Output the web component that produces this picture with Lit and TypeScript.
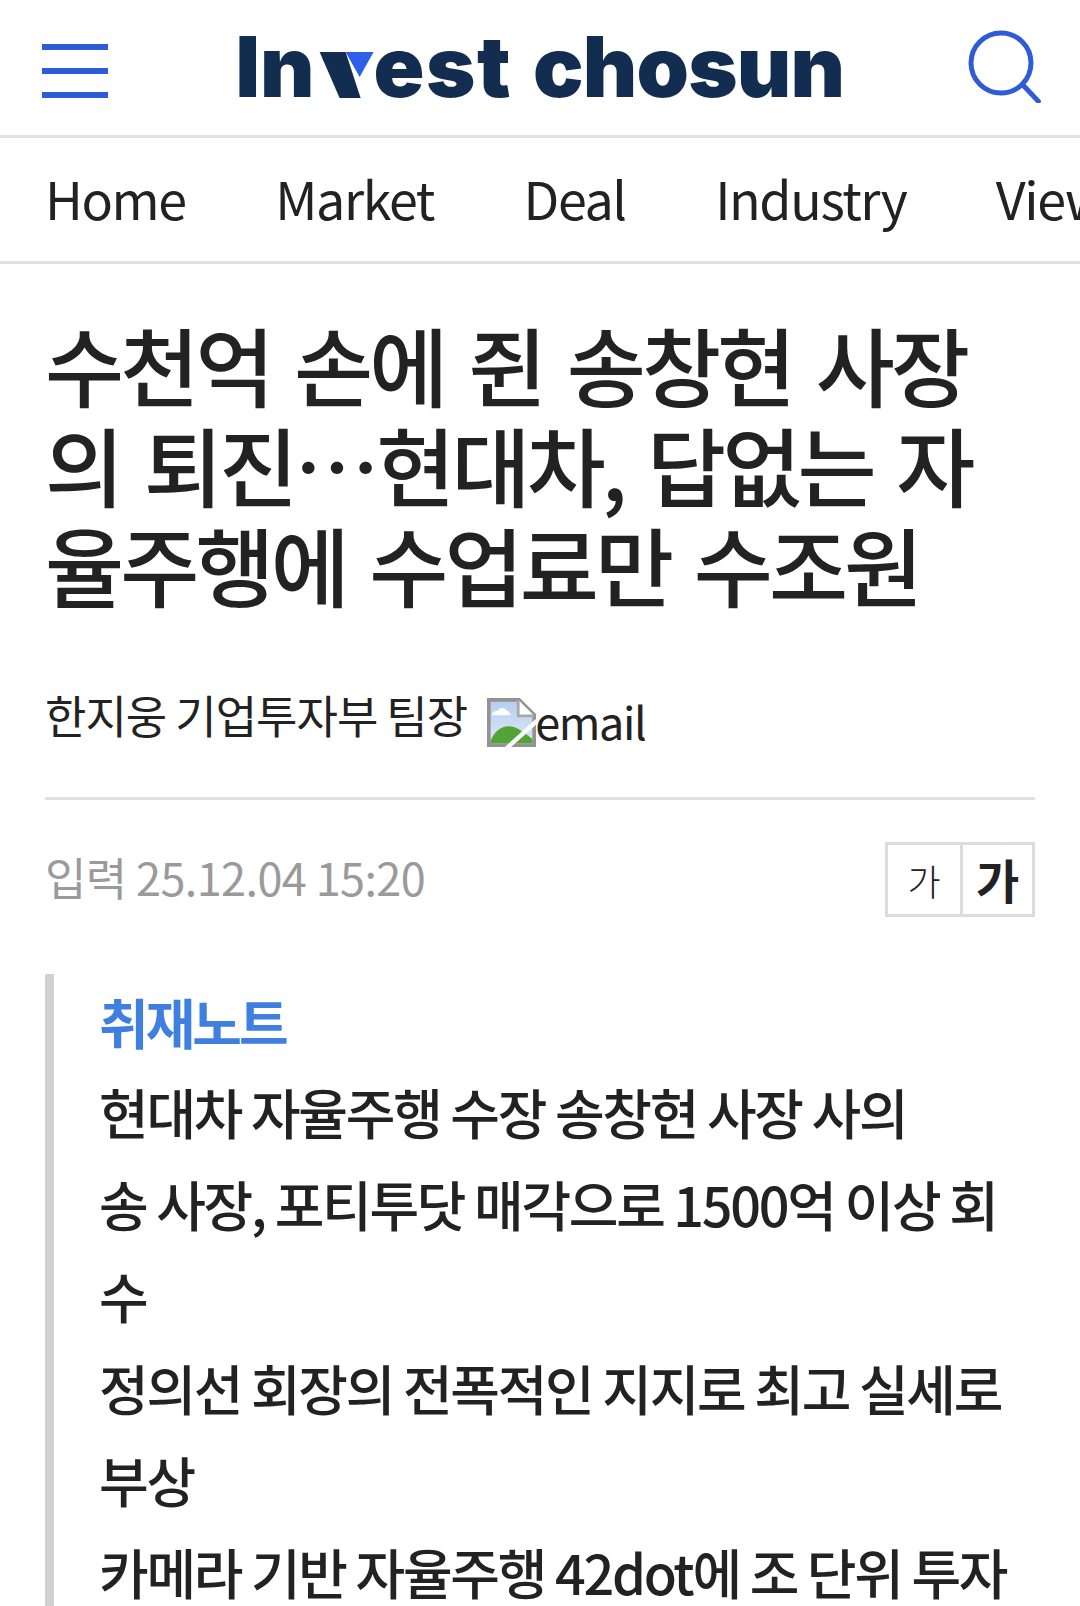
import { LitElement, html, css } from "lit";
import { customElement } from "lit/decorators.js";

@customElement("app-root")
export class AppRoot extends LitElement {
  static styles = css`
    :host {
      display: block;
      width: 1080px;
      height: 1606px;
      overflow: hidden;
      background: #fff;
      font-family: "Noto Sans CJK KR", "Noto Sans", sans-serif;
      color: #222;
    }
    .top {
      height: 135px;
      border-bottom: 3px solid #e1e1e4;
      display: flex;
      align-items: center;
      justify-content: space-between;
      padding: 0 39px 0 42px;
    }
    .menu { width: 66px; height: 54px; margin-top: 6px; display: flex; flex-direction: column; justify-content: space-between; }
    .menu i { display: block; height: 6px; background: #2f5bd6; }
    .logo {
      font-family: "Inter", "Liberation Sans", sans-serif;
      font-weight: 900;
      font-size: 84px;
      line-height: 84px;
      color: #122d50;
      white-space: nowrap;
      display: flex;
      align-items: baseline;
      margin: -1px 0 0 4px;
    }
    .est { letter-spacing: 1.5px; }
    .chosun { letter-spacing: -0.8px; margin-left: 21px; }
    .v {
      position: relative;
      display: inline-block;
      width: 56px;
      margin-left: 3px;
      color: transparent;
      overflow: visible;
    }
    .v::before {
      content: "";
      position: absolute;
      left: 0;
      top: 27px;
      width: 56px;
      height: 46px;
      background: #122d50;
      clip-path: polygon(2px 0, 28px 0, 43px 100%, 22px 100%);
    }
    .v::after {
      content: "";
      position: absolute;
      left: 28px;
      top: 27px;
      width: 28px;
      height: 25px;
      background: #2f5fe6;
      clip-path: polygon(0 0, 100% 0, 50% 100%);
    }
    .search { width: 73px; height: 73px; display: block; margin-top: -3px; }
    nav {
      height: 118px;
      padding: 0 0 5px 45px;
      border-bottom: 3px solid #e1e1e4;
      display: flex;
      align-items: center;
      gap: 89.5px;
      overflow: hidden;
      font-size: 52px;
      white-space: nowrap;
      letter-spacing: -1.4px;
    }
    article { padding: 0 45px; }
    h1 {
      margin: 50px 0 0;
      font-size: 86px;
      font-weight: 500;
      line-height: 100px;
      letter-spacing: -3.9px;
      word-spacing: 8px;
      color: #222;
    }
    .author {
      margin-top: 71px;
      height: 60px;
      display: flex;
      align-items: flex-start;
      font-size: 45px;
      line-height: 60px;
      letter-spacing: -1px;
      padding-bottom: 52px;
      border-bottom: 3px solid #e1e1e4;
    }
    .broken { display: inline-flex; align-items: flex-end; margin: 12px 0 0 20px; }
    .broken svg { width: 49px; height: 49px; display: block; }
    .broken span { font-size: 45px; line-height: 48px; letter-spacing: -1.4px; margin: 0 0 2px -1px; }
    .meta {
      display: flex;
      justify-content: space-between;
      align-items: center;
      margin-top: 42px;
    }
    .date { font-size: 45px; color: #9a9a9a; letter-spacing: -0.6px; margin-bottom: 6px; }
    .sizes { display: flex; border: 3px solid #dcdcdc; height: 69px; }
    .sizes span { display: flex; align-items: center; justify-content: center; }
    .sizes .a { width: 72px; font-size: 36px; font-weight: 300; border-right: 3px solid #dcdcdc; }
    .sizes .b { width: 69px; font-size: 47px; font-weight: 700; padding-bottom: 3px; box-sizing: border-box; }
    .note {
      margin-top: 57px;
      border-left: 9px solid #d2d2d2;
      padding: 16px 20px 0 45px;
    }
    .note h2 {
      margin: 0 0 12px;
      font-size: 54px;
      line-height: 64px;
      font-weight: 700;
      color: #3f7fe0;
      letter-spacing: -3px;
    }
    .note ul { list-style: none; margin: 0; padding: 0; }
    .note li {
      font-size: 54px;
      font-weight: 500;
      line-height: 92px;
      letter-spacing: -2.3px;
    }
  `;

  render() {
    return html`
      <header class="top">
        <div class="menu"><i></i><i></i><i></i></div>
        <div class="logo"><span>In</span><span class="v">v</span><span class="est">est</span><span class="chosun">chosun</span></div>
        <svg class="search" viewBox="0 0 73 73" fill="none" stroke="#2f5bd6" stroke-width="5">
          <circle cx="33" cy="33" r="30"></circle>
          <path d="M54 54 L72 73"></path>
        </svg>
      </header>
      <nav>
        <span>Home</span><span>Market</span><span>Deal</span><span>Industry</span><span>View</span>
      </nav>
      <article>
        <h1>수천억 손에 쥔 송창현 사장의 퇴진…현대차, 답없는 자율주행에 수업료만 수조원</h1>
        <div class="author">
          <span>한지웅 기업투자부 팀장</span>
          <span class="broken">
            <svg viewBox="0 0 16 16">
              <defs>
                <linearGradient id="sky" x1="0" y1="0" x2="0" y2="1">
                  <stop offset="0" stop-color="#b5cdf0"></stop>
                  <stop offset="1" stop-color="#dfe8f7"></stop>
                </linearGradient>
              </defs>
              <path d="M0.6 0.6H10.5L15.4 5.5V15.4H0.6Z" fill="url(#sky)" stroke="#939393" stroke-width="1.2"></path>
              <path d="M10.2 0.6V5.8H15.4" fill="#fff" stroke="#a8a8a8" stroke-width="0.9"></path>
              <path d="M1.6 5.6C1.8 4.4 3 4.2 3.6 4.2C4 3 6 3 6.4 4.2C7.2 4.2 7.6 5 7.6 5.6Z" fill="#fff"></path>
              <path d="M1.2 14.8V14C2.2 11 4.6 9.2 7 9.2C9.4 9.2 11.4 10.6 14.8 13.4V14.8Z" fill="#52a535"></path>
              <path d="M6.4 16.4 L16.4 7.4" stroke="#fff" stroke-width="1.4"></path>
            </svg><span>email</span>
          </span>
        </div>
        <div class="meta">
          <span class="date">입력 25.12.04 15:20</span>
          <div class="sizes"><span class="a">가</span><span class="b">가</span></div>
        </div>
        <section class="note">
          <h2>취재노트</h2>
          <ul>
            <li>현대차 자율주행 수장 송창현 사장 사의</li>
            <li>송 사장, 포티투닷 매각으로 1500억 이상 회수</li>
            <li>정의선 회장의 전폭적인 지지로 최고 실세로 부상</li>
            <li>카메라 기반 자율주행 42dot에 조 단위 투자</li>
          </ul>
        </section>
      </article>
    `;
  }
}
